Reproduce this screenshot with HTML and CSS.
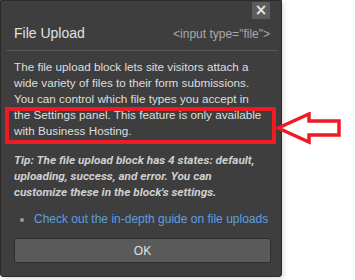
FILE: index.html
```html
<!DOCTYPE html>
<html lang="en">
<head>
    <meta charset="UTF-8">
    <title>File Upload</title>
    <link rel="stylesheet" href="styles.css">
</head>
<body>
    <div class="page">
        <div class="dialog">
            <button class="close_btn">&times;</button>
            <div class="dialog-head">
                <h2>File Upload</h2>
                <span class="tag">&lt;input type="file"&gt;</span>
            </div>
            <p class="desc">The file upload block lets site visitors attach a wide variety of files to their form submissions. You can control which file types you accept in the Settings panel. This feature is only available with Business Hosting.</p>
            <p class="tip">Tip: The file upload block has 4 states: default, uploading, success, and error. You can customize these in the block's settings.</p>
            <ul class="links">
                <li><a href="#">Check out the in-depth guide on file uploads</a></li>
            </ul>
            <button class="ok_btn">OK</button>
        </div>

        <!-- annotation drawn over the screenshot -->
        <div class="highlight"></div>
        <svg class="arrow" width="70" height="36" viewBox="0 0 70 36">
            <path d="M3 16 L34 2 L34 9 L64 9 L64 23 L34 23 L34 30 Z" fill="none" stroke="#ed1c24" stroke-width="3.5" stroke-linejoin="miter"/>
        </svg>
    </div>
</body>
</html>
```

FILE: styles.css
```css
body {
    margin: 0;
    background: #ffffff;
    font-family: "Liberation Sans", Arial, sans-serif;
}
.page {
    position: relative;
    width: 355px;
    height: 280px;
}
.dialog {
    position: relative;
    width: 282px;
    height: 277px;
    box-sizing: border-box;
    background: #3e3e3e;
    border: 1px solid #2b2b2b;
    border-radius: 0 0 3px 3px;
    box-shadow: 2px 2px 4px rgba(0, 0, 0, 0.12);
    padding: 0 11px 0 13px;
    color: #dcdcdc;
}
.close_btn {
    position: absolute;
    top: 1px;
    right: 11px;
    width: 18px;
    height: 17px;
    padding: 0;
    border: none;
    background: #5c5c5c;
    color: #e6e6e6;
    font-family: "DejaVu Sans", sans-serif;
    font-size: 15px;
    font-weight: bold;
    line-height: 17px;
    text-align: center;
}
.dialog-head {
    display: flex;
    justify-content: space-between;
    align-items: baseline;
    margin: 0 -8px 0 -8px;
    padding: 24px 8px 9px 8px;
    border-bottom: 1px solid #575757;
}
h2 {
    margin: 0;
    font-size: 14px;
    font-weight: normal;
    color: #e0e0e0;
}
.tag {
    font-size: 12px;
    color: #a9a9a9;
}
.desc {
    margin: 8px 0 0 0;
    padding-right: 7px;
    font-size: 11.7px;
    line-height: 16px;
    color: #dedede;
}
.tip {
    margin: 13px 0 0 0;
    padding-right: 7px;
    font-family: Roboto, sans-serif;
    font-style: italic;
    font-weight: bold;
    font-size: 11.8px;
    line-height: 16px;
    color: #cfcfcf;
}
.links {
    margin: 11px 0 0 0;
    padding: 0 0 0 20px;
    font-size: 12px;
    line-height: 16px;
    color: #9a9a9a;
}
.links a {
    color: #5c9ee0;
    text-decoration: none;
}
.ok_btn {
    display: block;
    width: 257px;
    height: 25px;
    margin-top: 11px;
    background: #5a5a5a;
    border: 1px solid #2f2f2f;
    border-radius: 2px;
    color: #e0e0e0;
    font-family: "Liberation Sans", Arial, sans-serif;
    font-size: 12px;
}
.highlight {
    position: absolute;
    left: 5px;
    top: 107px;
    width: 263px;
    height: 29px;
    border: 4px solid #ed1c24;
}
.arrow {
    position: absolute;
    left: 275px;
    top: 112px;
}
```
